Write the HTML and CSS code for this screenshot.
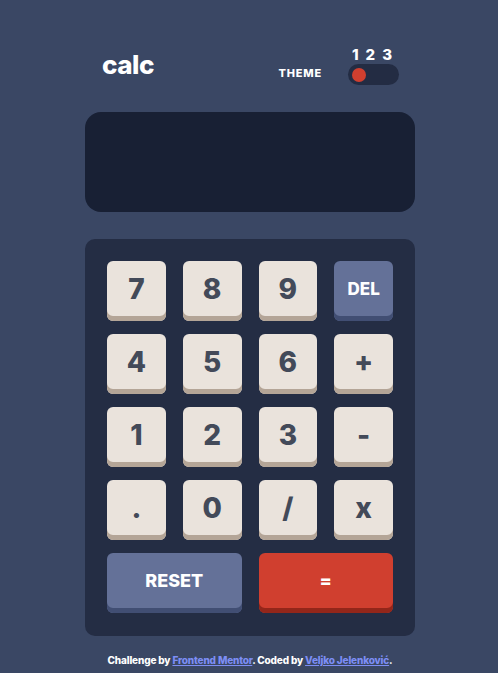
FILE: index.html
```html
<!DOCTYPE html>
<html lang="en">
<head>
<meta charset="utf-8">
<title>Calculator app</title>
<link rel="stylesheet" href="styles.css">
</head>
<body>
<main class="calc">
  <header class="header">
    <h1 class="title">calc</h1>
    <div class="theme">
      <span class="theme-label">THEME</span>
      <div class="switch">
        <div class="switch-nums"><span>1</span><span>2</span><span>3</span></div>
        <div class="toggle"><span class="knob"></span></div>
      </div>
    </div>
  </header>
  <div class="screen"></div>
  <div class="keypad">
    <button class="key">7</button>
    <button class="key">8</button>
    <button class="key">9</button>
    <button class="key key-alt key-small">DEL</button>
    <button class="key">4</button>
    <button class="key">5</button>
    <button class="key">6</button>
    <button class="key">+</button>
    <button class="key">1</button>
    <button class="key">2</button>
    <button class="key">3</button>
    <button class="key">-</button>
    <button class="key">.</button>
    <button class="key">0</button>
    <button class="key">/</button>
    <button class="key">x</button>
    <button class="key key-alt key-wide key-mid">RESET</button>
    <button class="key key-eq key-wide key-mid">=</button>
  </div>
  <footer class="footer">
    Challenge by <a href="#">Frontend Mentor</a>. Coded by <a href="#">Veljko Jelenković</a>.
  </footer>
</main>
</body>
</html>
```
FILE: styles.css
```css
* { box-sizing: border-box; }
html, body { margin: 0; padding: 0; }
body {
  background: #3a4764;
  font-family: "Inter", "Liberation Sans", sans-serif;
  color: #ffffff;
}
.calc {
  width: 330px;
  margin: 0 auto;
  padding-top: 47px;
  position: relative;
  left: 1px;
}
.header {
  display: flex;
  justify-content: space-between;
  align-items: flex-end;
  padding: 0 16px 0 17px;
  height: 38px;
}
.title {
  margin: 0 0 7px;
  font-size: 26px;
  font-weight: 800;
  line-height: 1;
  letter-spacing: -0.5px;
}
.theme {
  display: flex;
  align-items: flex-end;
  gap: 26px;
}
.theme-label {
  font-size: 11px;
  font-weight: 800;
  letter-spacing: 0.8px;
  margin-bottom: 5px;
}
.switch {
  display: flex;
  flex-direction: column;
  width: 51px;
}
.switch-nums {
  display: flex;
  justify-content: space-between;
  padding: 0 7px 0 4px;
  font-size: 15px;
  font-weight: 800;
  line-height: 15px;
  height: 15px;
}
.toggle {
  margin-top: 2px;
  height: 21px;
  border-radius: 11px;
  background: #232c43;
  display: flex;
  align-items: center;
  padding-left: 4px;
}
.knob {
  width: 14px;
  height: 14px;
  border-radius: 50%;
  background: #d03f2f;
}
.screen {
  margin-top: 27px;
  height: 100px;
  border-radius: 16px;
  background: #182034;
}
.keypad {
  margin-top: 27px;
  background: #242d44;
  border-radius: 10px;
  padding: 22px 22px 23px;
  display: grid;
  grid-template-columns: repeat(4, 1fr);
  gap: 13px 17px;
}
.key {
  height: 60px;
  border: 0;
  border-radius: 6px;
  background: #eae3dc;
  box-shadow: inset 0 -5px 0 #b4a597;
  color: #434a59;
  font-family: inherit;
  font-size: 28px;
  font-weight: 800;
  padding: 0 0 4px;
  line-height: 1;
}
.key-alt {
  background: #647198;
  box-shadow: inset 0 -5px 0 #414e73;
  color: #ffffff;
}
.key-eq {
  background: #d03f2f;
  box-shadow: inset 0 -5px 0 #93261a;
  color: #ffffff;
}
.key-small { font-size: 17px; }
.key-mid { font-size: 18px; }
.key-wide { grid-column: span 2; }
.footer {
  margin-top: 17px;
  text-align: center;
  font-size: 10px;
  font-weight: 800;
  line-height: 14px;
  letter-spacing: -0.15px;
}
.footer a { color: #7d8ef5; }
```
